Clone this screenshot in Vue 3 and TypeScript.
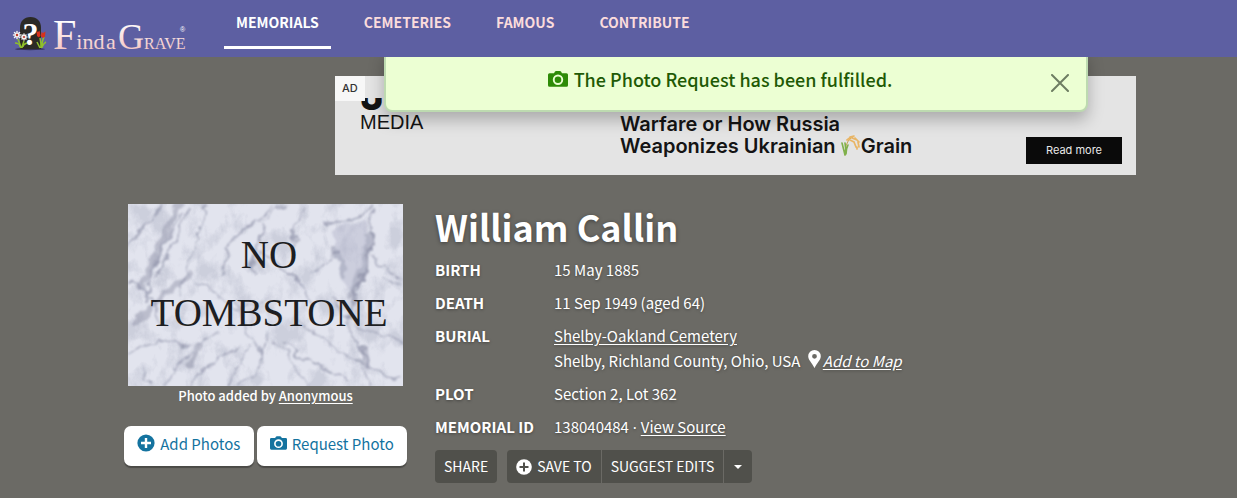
<script setup lang="ts">
import { ref } from 'vue'

const links = ['MEMORIALS', 'CEMETERIES', 'FAMOUS', 'CONTRIBUTE']
const toastOpen = ref(true)
</script>

<template>
  <div class="page">
    <header class="bar">
      <a class="logo" href="#" aria-label="Find a Grave home">
        <svg width="176" height="40" viewBox="0 0 176 40">
          <defs>
            <linearGradient id="logoInk" x1="0" y1="0" x2="0" y2="1">
              <stop offset="0.2" stop-color="#ffffff" />
              <stop offset="1" stop-color="#f2b8b4" />
            </linearGradient>
          </defs>
          <ellipse cx="17" cy="35" rx="15" ry="1.2" fill="#34305a" />
          <path d="M7 35V14C7 7 11 3 17.500 3S28 7 28 14v21z" fill="#2b2a26" />
          <text class="query" x="17.500" y="31" text-anchor="middle">?</text>
          <g fill="none" stroke="#8fc02c" stroke-width="1.500">
            <path d="M5 25c1 3 2 5 3 9M11 27c-1 3-2 5-2 7M2 29c3 0 5 2 5 4M14 29c-3 1-4 3-4 4" />
            <path d="M27 24c1 4 1 7 1 10M31 23c-2 3-2 7-2 11M24 28c1 2 2 4 3 6M33 28c-2 1-3 3-4 5" />
          </g>
          <g stroke="#f6f3f1" stroke-width="1.500" stroke-linecap="round">
            <path d="M4 17.500v7M.5 21h7M1.500 18.500l5 5M6.500 18.500l-5 5" />
            <path d="M11 20v6M8 23h6M9 21l4 4M13 21l-4 4" />
          </g>
          <circle cx="4" cy="21" r="1.200" fill="#c0392b" />
          <circle cx="11" cy="23" r="1.100" fill="#c0392b" />
          <path d="M23.500 17l1.500 1 1.500-1.500 1 5-1.500 2-2-1.500zM28.500 18l1.500 1 2.500-1.500-.5 5-2 1.500-2-1.500z" fill="#d8321c" />
          <text class="wordmark" y="35" fill="url(#logoInk)">
            <tspan x="40" font-size="42">F</tspan><tspan font-size="22">ind</tspan><tspan font-size="22" x="93">a</tspan><tspan font-size="36" x="105">G</tspan><tspan font-size="16">RAVE</tspan>
          </text>
          <text class="mark" x="167" y="18">®</text>
        </svg>
      </a>
      <nav class="nav">
        <a v-for="(l, i) in links" :key="l" href="#" :class="{ active: i === 0 }">{{ l }}</a>
      </nav>
    </header>

    <div v-if="toastOpen" class="toast" role="status">
      <svg class="cam" width="20" height="16" viewBox="0 0 20 16"><path fill="currentColor" fill-rule="evenodd" d="M6 2.200 7 .600Q7.400 0 8 0h4q.6 0 1 .6l1 1.600h4.500Q20 2.200 20 3.700v10.600q0 1.500-1.500 1.500h-17Q0 15.800 0 14.300V3.700Q0 2.200 1.500 2.200zM10 3.600a5.200 5.200 0 1 0 0 10.400 5.200 5.200 0 0 0 0-10.400zm0 1.900a3.300 3.300 0 1 1 0 6.600 3.300 3.300 0 0 1 0-6.600z" /></svg>
      <span>The Photo Request has been fulfilled.</span>
      <button class="close" type="button" aria-label="Close" @click="toastOpen = false">
        <svg width="18" height="18" viewBox="0 0 18 18"><path d="M1 1l16 16M17 1L1 17" stroke="#6d7d62" stroke-width="2" stroke-linecap="round" /></svg>
      </button>
    </div>

    <section class="ad" aria-label="Advertisement">
      <span class="badge">AD</span>
      <div class="brand"><b>U</b><span>MEDIA</span></div>
      <p class="headline">
        Warfare or How Russia<br />Weaponizes Ukrainian
        <svg width="20" height="22" viewBox="0 0 20 22" fill="none" stroke-linecap="round">
          <path d="M4 20C4 11 7 3 12 2" stroke="#c5a24c" stroke-width="1" />
          <path d="M4 20C3 16 2 12 1 8M4 20c1-4 1-8 0-12M5 19c0-4 1-7 2-9" stroke="#7fb04a" stroke-width="1.600" />
          <path d="M6 5l4-3M9 2l4-1M11 3l5 2M9 5l4 2M14 3l4 4M17 7l1 5M13 7l2 5M16 12v2" stroke="#e9b565" stroke-width="1.700" />
        </svg>Grain
      </p>
      <a class="more" href="#">Read more</a>
    </section>

    <main class="content">
      <aside class="side">
        <svg class="photo" viewBox="0 0 275 182" role="img" aria-label="No tombstone">
          <defs>
            <filter id="grain" x="0" y="0" width="100%" height="100%">
              <feTurbulence type="fractalNoise" baseFrequency="0.05 0.035" numOctaves="5" seed="8" />
              <feColorMatrix values="0 0 0 0 0.52  0 0 0 0 0.54  0 0 0 0 0.64  4 0 0 0 -1.850" />
            </filter>
            <filter id="vein" x="-10%" y="-10%" width="120%" height="120%">
              <feTurbulence type="fractalNoise" baseFrequency="0.06" numOctaves="4" seed="3" />
              <feDisplacementMap in="SourceGraphic" scale="16" xChannelSelector="R" yChannelSelector="G" />
              <feGaussianBlur stdDeviation="0.8" />
            </filter>
          </defs>
          <rect width="275" height="182" fill="#e2e4ee" />
          <rect width="275" height="182" filter="url(#grain)" opacity="0.6" />
          <g filter="url(#vein)" fill="none" stroke="#7f839c" stroke-linecap="round">
            <g stroke-width="6" opacity="0.4">
              <path d="M50 0C40 25 28 55 12 85M62 68C45 82 28 96 8 122M242 28c-4 26-8 44-18 66M207 48l8 20M72 145l-9 14M232 142l10 18" />
            </g>
            <path d="M208 28q20-14 34-10-2 40-16 72-12-6-18-34z" fill="#a9acc2" stroke="none" opacity="0.4" />
            <g stroke-width="2" opacity="0.6">
              <path d="M34 0C24 20 10 32 0 42M54 10C38 40 22 60 18 98M62 2C56 30 42 46 30 70M2 78c20 8 22 20 28 42" />
              <path d="M196 18c18 4 38-4 48-14M244 10c4 32-14 70-24 110M135 24c-2 14-14 24-10 50M146 4C120 20 100 40 92 70" />
            </g>
            <g stroke-width="1.300" opacity="0.65">
              <path d="M216 118c14 22 28 50 54 62M110 96c4 30 12 36 28 60M94 126C70 140 48 160 36 182M140 130c-4 24-10 42-28 50M170 112c14 20 30 30 70 50" />
              <path d="M22 182l-6-16M158 138c10 20 34 22 62 40M184 70l26-22M150 60l24 20M256 76l16 6" />
              <path d="M80 0l-30 90M70 76l40 30 30-10M128 44l40 30 20 30M176 4l-14 40M100 182l20-40M60 182l50-42M204 96l30 30 40 10M244 52l24 20M180 182l-30-44M240 182l-6-40M0 150l30-16 30 8M160 0l-30 20" />
            </g>
          </g>
          <g class="carved" text-anchor="middle">
            <text x="141" y="64">NO</text>
            <text x="141" y="122">TOMBSTONE</text>
          </g>
        </svg>
        <p class="caption">Photo added by <a href="#">Anonymous</a></p>
        <div class="photo-actions">
          <button type="button">
            <svg width="18" height="18" viewBox="0 0 18 18"><circle cx="9" cy="9" r="8.600" fill="currentColor" /><path d="M9 4v10M4 9h10" stroke="#fff" stroke-width="2.400" /></svg>
            Add Photos
          </button>
          <button type="button">
            <svg width="17" height="18" viewBox="0 0 20 16"><path fill="currentColor" fill-rule="evenodd" d="M6 2.200 7 .600Q7.400 0 8 0h4q.6 0 1 .6l1 1.600h4.500Q20 2.200 20 3.700v10.600q0 1.500-1.500 1.500h-17Q0 15.800 0 14.300V3.700Q0 2.200 1.500 2.200zM10 3.600a5.200 5.200 0 1 0 0 10.400 5.200 5.200 0 0 0 0-10.400zm0 1.900a3.300 3.300 0 1 1 0 6.600 3.300 3.300 0 0 1 0-6.600z" /></svg>
            Request Photo
          </button>
        </div>
      </aside>

      <section class="info">
        <h1>William Callin</h1>
        <dl>
          <dt>BIRTH</dt>
          <dd>15 May 1885</dd>
          <dt>DEATH</dt>
          <dd>11 Sep 1949 (aged 64)</dd>
          <dt>BURIAL</dt>
          <dd>
            <a href="#">Shelby-Oakland Cemetery</a><br />
            Shelby, Richland County, Ohio, USA
            <span class="map"><svg width="13" height="18" viewBox="0 0 13 18"><path fill="#fff" fill-rule="evenodd" d="M6.500 0A6.300 6.300 0 0 0 .200 6.300C.200 10 4 13 6.500 18 9 13 12.800 10 12.800 6.300A6.300 6.300 0 0 0 6.500 0zm0 3.900a2.400 2.400 0 1 1 0 4.800 2.400 2.400 0 0 1 0-4.800z" /></svg><a href="#"><i>Add to Map</i></a></span>
          </dd>
          <dt>PLOT</dt>
          <dd>Section 2, Lot 362</dd>
          <dt>MEMORIAL ID</dt>
          <dd>138040484<span class="dot"> · </span><a href="#">View Source</a></dd>
        </dl>
        <div class="actions">
          <button type="button" class="single">SHARE</button>
          <div class="group">
            <button type="button">
              <svg width="16" height="16" viewBox="0 0 16 16"><circle cx="8" cy="8" r="7.800" fill="#fff" /><path d="M8 3.500v9M3.500 8h9" stroke="#50504b" stroke-width="2" /></svg>
              SAVE TO
            </button>
            <button type="button">SUGGEST EDITS</button>
            <button type="button" class="caret" aria-label="More options">
              <svg width="8" height="4" viewBox="0 0 8 4"><path d="M0 0h8L4 4z" fill="#fff" /></svg>
            </button>
          </div>
        </div>
      </section>
    </main>
  </div>
</template>

<style>
body {
  margin: 0;
  background: #6b6a65;
}
</style>

<style scoped>
.page {
  position: relative;
  min-height: 100vh;
  box-sizing: border-box;
  background: #6b6a65;
  color: #fff;
  font-family: "Noto Sans CJK SC", "Noto Sans", sans-serif;
  font-size: 15px;
  line-height: 25px;
}
.page * {
  box-sizing: border-box;
}
button {
  font: inherit;
  color: inherit;
  border: 0;
  cursor: pointer;
}
.bar {
  position: relative;
  z-index: 3;
  display: flex;
  height: 57px;
  background: #5d5fa2;
}
.logo {
  display: block;
  width: 224px;
  padding: 14px 0 0 13px;
}
.logo svg {
  display: block;
  overflow: visible;
}
.wordmark {
  font-family: "Liberation Serif", serif;
}
.query {
  font: 700 32px "Liberation Serif", serif;
  fill: #fff;
}
.mark {
  font: 7px "Liberation Sans", sans-serif;
  fill: #fff;
}
.nav {
  display: flex;
  gap: 21px;
}
.nav a {
  height: 49px;
  padding: 10px 12px 0;
  color: #fbdcdc;
  font-weight: 700;
  font-size: 14px;
  text-decoration: none;
}
.nav .active {
  color: #fff;
  border-bottom: 3px solid #fff;
}
.toast {
  position: absolute;
  z-index: 2;
  top: 49px;
  left: 384px;
  width: 704px;
  height: 63px;
  display: flex;
  justify-content: center;
  padding: 16px 32px 0 0;
  gap: 6px;
  background: #ecffd3;
  border: 2px solid #bddab0;
  border-radius: 8px;
  box-shadow: 0 8px 16px rgba(0, 0, 0, 0.25);
  color: #1f5a05;
  font-size: 18px;
  font-weight: 500;
}
.cam {
  margin-top: 4px;
  color: #2e8b07;
}
.close {
  position: absolute;
  right: 9px;
  top: 15px;
  padding: 8px;
  line-height: 0;
  background: none;
}
.ad {
  position: relative;
  display: flex;
  align-items: flex-start;
  width: 801px;
  min-height: 99px;
  margin: 19px 0 0 335px;
  padding: 0 14px 0 25px;
  background: #e4e4e4;
  color: #141414;
}
.badge {
  position: absolute;
  left: 0;
  top: 0;
  padding: 0 7px;
  background: #f7f7f7;
  color: #333;
  font: 500 11px/25px Inter, sans-serif;
}
.brand {
  width: 260px;
  padding-top: 22px;
}
.brand b {
  display: flex;
  align-items: flex-end;
  height: 14px;
  overflow: hidden;
  font: 900 32px/26px Inter, sans-serif;
}
.brand span {
  display: block;
  font: 20px/20px "Liberation Sans", sans-serif;
}
.headline {
  flex: 1;
  margin: 37px 0 0;
  font: 600 20px/22px Inter, sans-serif;
  white-space: nowrap;
}
.headline svg {
  margin-bottom: -4px;
}
.more {
  margin-top: 61px;
  width: 96px;
  background: #0a0a0a;
  color: #e8e8e8;
  font: 11px/27px Inter, sans-serif;
  text-align: center;
  text-decoration: none;
}
.content {
  display: flex;
  padding: 29px 16px 14px 124px;
}
.side {
  width: 283px;
  margin-right: 28px;
}
.photo {
  display: block;
  width: 275px;
  margin: 0 auto;
}
.carved {
  font: 39px "Liberation Serif", serif;
  fill: #1d1e22;
}
.caption {
  margin: 0;
  text-align: center;
  font-size: 13px;
  font-weight: 500;
  line-height: 20px;
}
.info a,
.caption a {
  color: #fff;
  text-underline-offset: 2px;
}
.photo-actions {
  display: flex;
  gap: 3px;
  margin-top: 20px;
}
.photo-actions button {
  display: flex;
  flex: 1 0 auto;
  justify-content: center;
  gap: 5px;
  height: 40px;
  padding: 5px 12px 0;
  border-radius: 7px;
  background: #fff;
  color: #14739f;
  box-shadow: 0 2px 1px rgba(0, 0, 0, 0.3);
}
.photo-actions svg {
  margin-top: 3px;
}
h1 {
  margin: 0 0 8px;
  font-size: 36px;
  line-height: 45px;
  font-weight: 700;
  text-shadow: 0 1px 4px rgba(0, 0, 0, 0.4);
}
dl {
  display: grid;
  grid-template-columns: 119px 1fr;
  row-gap: 8px;
  margin: 0;
  text-shadow: 0 1px 3px rgba(0, 0, 0, 0.35);
}
dt {
  font-weight: 700;
}
dd {
  margin: 0;
}
.dot {
  font-family: "Noto Sans", sans-serif;
}
.map {
  margin-left: 4px;
}
.map svg {
  margin: 0 2px -1px 0;
}
.actions {
  display: flex;
  gap: 10px;
  margin-top: 10px;
  font-size: 14px;
}
.actions button {
  display: flex;
  align-items: center;
  gap: 5px;
  height: 33px;
  padding: 0 9px;
  background: #50504b;
}
.actions .single {
  border-radius: 4px;
}
.group {
  display: flex;
  gap: 1px;
  border-radius: 4px;
  overflow: hidden;
}
.actions .caret {
  padding: 0 10px;
}
</style>
